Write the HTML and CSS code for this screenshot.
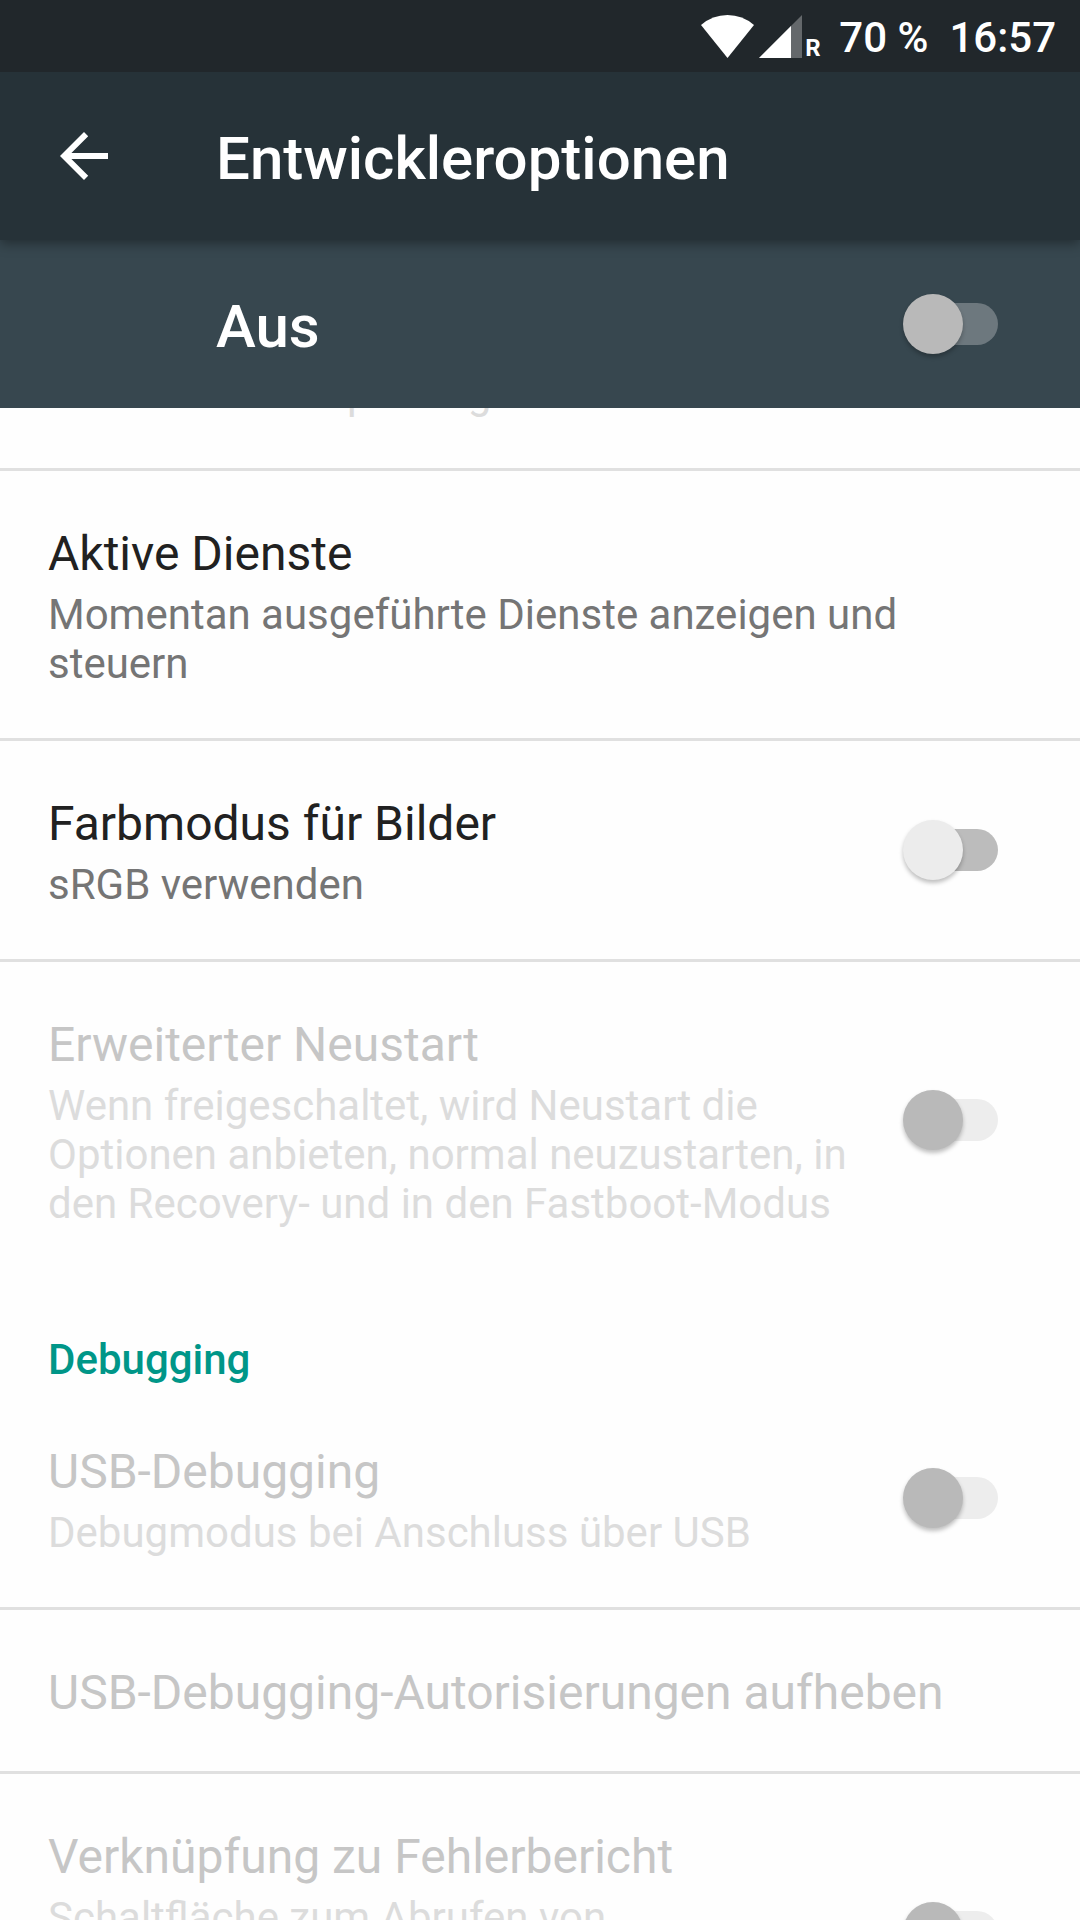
FILE: index.html
```html
<!DOCTYPE html>
<html lang="de">
<head>
<meta charset="utf-8">
<meta name="viewport" content="width=device-width, initial-scale=1">
<title>Entwickleroptionen</title>
<link rel="stylesheet" href="styles.css">
</head>
<body>
<div class="screen">
  <div class="status-bar">
    <svg class="status-wifi" viewBox="0 0 53 43" aria-hidden="true"><path fill="#fff" d="M26.500 43L0 10Q11.500 0 26.500 0T53 10z"/></svg>
    <svg class="status-signal" viewBox="0 0 43 43" aria-hidden="true"><path fill="#fff" fill-opacity=".3" d="M0 43L43 0v43z"/><path fill="#fff" d="M0 43L32 11v32z"/></svg>
    <span class="status-roaming">R</span>
    <span class="status-battery">70 %</span>
    <time class="status-clock">16:57</time>
  </div>

  <header class="app-bar">
    <button class="back-button" type="button" aria-label="Zurück">
      <svg viewBox="0 0 24 24" aria-hidden="true"><path fill="#fff" d="M20 11H7.800l5.600-5.600L12 4l-8 8 8 8 1.400-1.400L7.800 13H20z"/></svg>
    </button>
    <h1 class="bar-title">Entwickleroptionen</h1>
  </header>

  <div class="master-bar">
    <label class="bar-title" for="master">Aus</label>
    <input class="switch switch-on-dark" type="checkbox" role="switch" id="master">
  </div>

  <main class="settings">
    <div class="row row-scrolled row-disabled">
      <div class="row-text">
        <div class="row-summary">Bootloader-Entsperrung zulassen</div>
      </div>
    </div>
    <div class="row">
      <div class="row-text">
        <div class="row-title">Aktive Dienste</div>
        <div class="row-summary">Momentan ausgeführte Dienste anzeigen und steuern</div>
      </div>
    </div>
    <div class="row">
      <label class="row-text" for="colors">
        <span class="row-title">Farbmodus für Bilder</span>
        <span class="row-summary">sRGB verwenden</span>
      </label>
      <input class="switch" type="checkbox" role="switch" id="colors">
    </div>
    <div class="row row-disabled row-last">
      <label class="row-text" for="reboot">
        <span class="row-title">Erweiterter Neustart</span>
        <span class="row-summary">Wenn freigeschaltet, wird Neustart die Optionen anbieten, normal neuzustarten, in den Recovery- und in den Fastboot-Modus</span>
      </label>
      <input class="switch" type="checkbox" role="switch" id="reboot" disabled>
    </div>

    <h2 class="category">Debugging</h2>

    <div class="row row-disabled">
      <label class="row-text" for="usb">
        <span class="row-title">USB-Debugging</span>
        <span class="row-summary">Debugmodus bei Anschluss über USB</span>
      </label>
      <input class="switch" type="checkbox" role="switch" id="usb" disabled>
    </div>
    <div class="row row-disabled">
      <div class="row-text">
        <div class="row-title">USB-Debugging-Autorisierungen aufheben</div>
      </div>
    </div>
    <div class="row row-disabled">
      <label class="row-text" for="bugreport">
        <span class="row-title">Verknüpfung zu Fehlerbericht</span>
        <span class="row-summary">Schaltfläche zum Abrufen von<br>Fehlerberichten im Ein-/Aus-Menü<br>anzeigen</span>
      </label>
      <input class="switch" type="checkbox" role="switch" id="bugreport" disabled>
    </div>
  </main>
</div>
</body>
</html>
```

FILE: styles.css
```css
* {
  box-sizing: border-box;
}

body {
  margin: 0;
  background: #fefefe;
  font-family: Roboto, "Noto Sans", sans-serif;
}

.screen {
  display: flex;
  flex-direction: column;
  height: 100vh;
  overflow: hidden;
}

/* Status bar */
.status-bar {
  position: relative;
  z-index: 2;
  flex: none;
  display: flex;
  align-items: center;
  justify-content: flex-end;
  height: 72px;
  padding: 0 24px;
  background: #21272b;
  color: #fff;
  font-size: 42px;
  font-weight: 500;
  line-height: 48px;
}

.status-wifi {
  width: 53px;
  height: 43px;
  margin-right: 5px;
}

.status-signal {
  width: 43px;
  height: 43px;
}

.status-roaming {
  align-self: flex-end;
  width: 16px;
  margin: 0 18px 12px 3px;
  font-family: "Liberation Sans Narrow", Roboto, sans-serif;
  font-size: 24px;
  font-weight: 700;
  line-height: 24px;
}

.status-battery,
.status-clock {
  padding-top: 4px;
}

.status-battery {
  margin-right: 21px;
}

/* Title bars */
.app-bar,
.master-bar {
  flex: none;
  display: flex;
  align-items: center;
  height: 168px;
  color: #fff;
}

.app-bar {
  position: relative;
  z-index: 1;
  padding: 0 48px;
  gap: 96px;
  background: #263238;
  box-shadow: 0 3px 12px rgba(0, 0, 0, 0.4);
}

.master-bar {
  justify-content: space-between;
  padding: 0 82px 0 216px;
  background: #37474f;
}

.back-button {
  width: 72px;
  height: 72px;
  padding: 0;
  border: 0;
  background: none;
}

.back-button svg {
  display: block;
}

.bar-title {
  margin: 0;
  padding-top: 6px;
  font-size: 60px;
  font-weight: 500;
  line-height: 70px;
}

/* Settings list */
.settings {
  flex: 1;
  min-height: 0;
  overflow: hidden;
}

.row {
  display: flex;
  align-items: center;
  gap: 16px;
  padding: 0 48px;
  border-bottom: 3px solid #e0e0e0;
}

.row-last {
  border-bottom: 0;
}

.row-text {
  flex: 1;
  display: flex;
  flex-direction: column;
  gap: 8px;
  padding: 55px 0 50px;
}

/* The list is scrolled partway through its first row */
.row-scrolled {
  margin-top: -94px;
}

.row-title {
  color: #212121;
  font-size: 48px;
  line-height: 56px;
}

.row-summary {
  color: #757575;
  font-size: 42px;
  line-height: 49px;
}

.row-disabled .row-title {
  color: #c6c6c6;
}

.row-disabled .row-summary {
  color: #dcdcdc;
}

.category {
  margin: 0;
  padding: 57px 48px 5px;
  color: #009688;
  font-size: 42px;
  font-weight: 500;
  line-height: 49px;
}

/* Switches */
.switch {
  --track: #bcbcbc;
  --thumb: #ececec;
  appearance: none;
  position: relative;
  flex: none;
  display: flex;
  width: 95px;
  height: 60px;
  margin: 0;
}

.row .switch {
  margin-right: 34px;
}

.switch::before {
  content: "";
  flex: 1;
  margin: 9px 0 9px 9px;
  border-radius: 21px;
  background: var(--track);
}

.switch::after {
  content: "";
  position: absolute;
  top: 0;
  left: 0;
  width: 60px;
  height: 60px;
  border-radius: 50%;
  background: var(--thumb);
  box-shadow: 0 3px 4px rgba(0, 0, 0, 0.25);
}

.switch:checked::after {
  left: 35px;
}

.switch:disabled {
  --track: #ededed;
  --thumb: #b9b9b9;
}

.switch-on-dark {
  --track: #6d787e;
  --thumb: #b9b9b9;
}
```
